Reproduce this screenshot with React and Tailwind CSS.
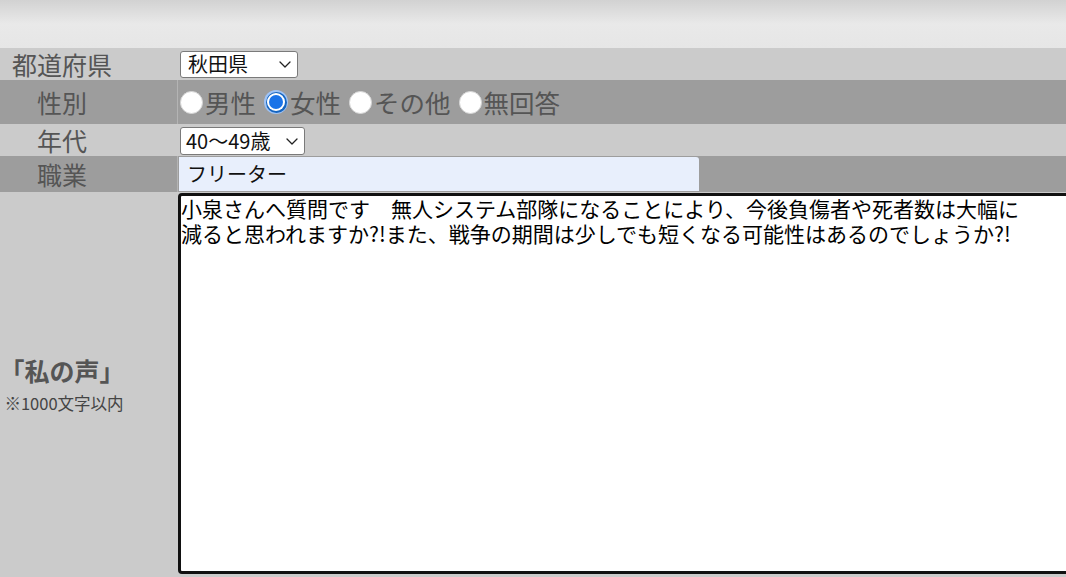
import React, { useState } from 'react';

const jp = { fontFamily: '"Noto Sans CJK JP", "Noto Sans", sans-serif' };

const Chevron = () => (
  <svg width="14" height="9" viewBox="0 0 14 9" fill="none" stroke="#222" strokeWidth="1.3" strokeLinecap="round" strokeLinejoin="round">
    <polyline points="2 2 7 7 12 2" />
  </svg>
);

const Radio = ({ checked, label, onClick }) => (
  <label className="flex items-center cursor-pointer" onClick={onClick}>
    {checked ? (
      <span className="w-[24px] h-[24px] rounded-full bg-[#9fc3f5] flex items-center justify-center">
        <span className="w-[21px] h-[21px] rounded-full bg-[#1565c0] flex items-center justify-center">
          <span className="w-[18px] h-[18px] rounded-full bg-white flex items-center justify-center">
            <span className="w-[14px] h-[14px] rounded-full bg-[#1a73e8]" />
          </span>
        </span>
      </span>
    ) : (
      <span className="w-[23px] h-[23px] rounded-full bg-white border border-[#d6d6d6]" />
    )}
    <span className="ml-[2px] mr-[8px] text-[25.5px] leading-none text-[#555]">{label}</span>
  </label>
);

const Row = ({ label, dark, height, children }) => (
  <div className={`flex ${height} ${dark ? 'bg-[#9d9d9d]' : 'bg-[#cbcbcb]'}`}>
    <div className={`w-[178px] shrink-0 flex items-center ${dark ? 'border-r border-[#b4b4b4]' : ''}`}>
      <div className="w-[124px] text-center text-[25px] leading-none text-[#555]">{label}</div>
    </div>
    <div className="flex-1 flex items-center">{children}</div>
  </div>
);

export default function App() {
  const [gender, setGender] = useState('女性');
  const text =
    '小泉さんへ質問です　無人システム部隊になることにより、今後負傷者や死者数は大幅に\n減ると思われますか?!また、戦争の期間は少しでも短くなる可能性はあるのでしょうか?!';

  return (
    <div className="w-[1066px] h-[577px] overflow-hidden bg-[#cbcbcb]" style={jp}>
      {/* header strip */}
      <div className="h-[48px] bg-gradient-to-b from-[#d2d2d2] via-[#e9e9e9] to-[#e6e6e6]" />

      <Row label="都道府県" height="h-[32px]">
        <div className="ml-[2px] w-[118px] h-[27px] bg-white border border-[#7a7a7a] rounded-[3px] flex items-center justify-between pl-[7px] pr-[5px]">
          <span className="text-[20px] leading-none text-[#111]">秋田県</span>
          <Chevron />
        </div>
      </Row>

      <Row label="性別" dark height="h-[44px]">
        <div className="flex items-center ml-[2px]">
          {['男性', '女性', 'その他', '無回答'].map((g) => (
            <Radio key={g} label={g} checked={gender === g} onClick={() => setGender(g)} />
          ))}
        </div>
      </Row>

      <Row label="年代" height="h-[32px]">
        <div className="ml-[2px] mt-[2px] w-[125px] h-[28px] bg-white border border-[#7a7a7a] rounded-[3px] flex items-center justify-between pl-[5px] pr-[5px]">
          <span className="text-[20px] leading-none text-[#111]">40〜49歳</span>
          <Chevron />
        </div>
      </Row>

      <Row label="職業" dark height="h-[36px]">
        <div className="ml-[1px] w-[520px] h-[34px] bg-[#e8effc] rounded-tr-[3px] flex items-center pl-[8px]">
          <span className="text-[20px] leading-none text-[#111]">フリーター</span>
        </div>
      </Row>

      {/* 私の声 */}
      <div className="flex h-[385px] bg-[#cbcbcb]">
        <div className="w-[178px] shrink-0 flex items-center">
          <div className="w-[128px] flex flex-col items-center">
            <div className="text-[25px] font-bold leading-none text-[#555] -ml-[4px]">「私の声」</div>
            <div className="mt-[12px] text-[16.5px] leading-none text-[#444]">※1000文字以内</div>
          </div>
        </div>
        <div className="flex-1 pt-[1px]">
          <textarea
            className="block w-[900px] h-[381px] bg-white border-[3px] border-[#111] rounded-[4px] px-0 py-0 text-[21px] leading-[25px] text-black resize-none outline-none whitespace-pre-wrap"
            style={jp}
            defaultValue={text}
          />
        </div>
      </div>
    </div>
  );
}
